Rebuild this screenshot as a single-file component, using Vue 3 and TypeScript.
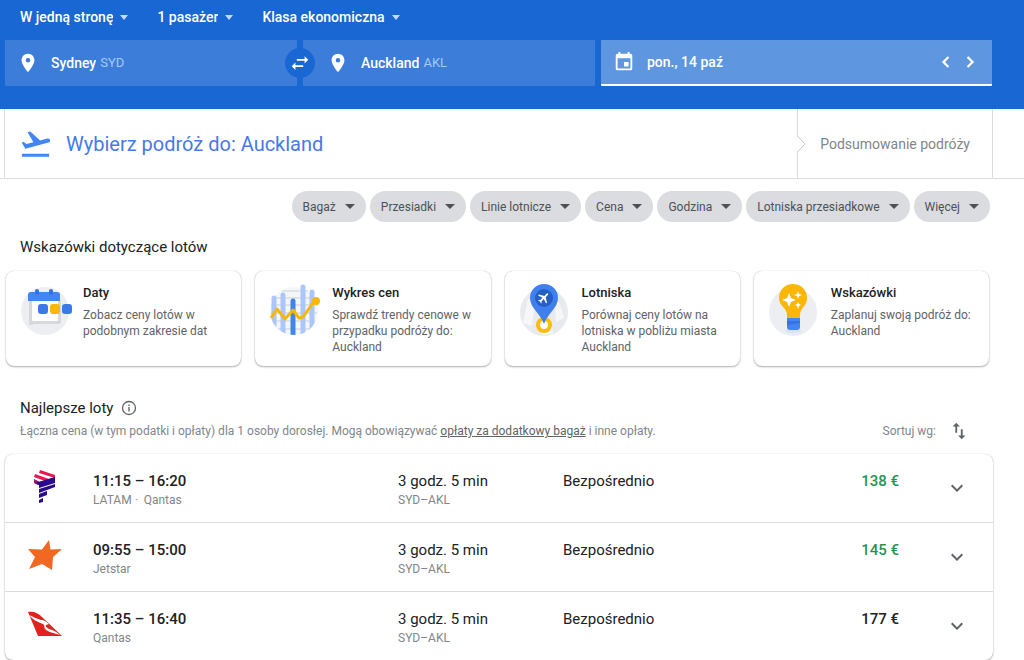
<script setup lang="ts">
import { ref } from 'vue'

interface Flight {
  airline: 'latam' | 'jetstar' | 'qantas'
  times: string
  carrier: string
  duration: string
  route: string
  stops: string
  price: string
  cheap: boolean
}

const tripType = ref('W jedną stronę')
const passengers = ref('1 pasażer')
const cabin = ref('Klasa ekonomiczna')
const tripTypes = ['W jedną stronę', 'W obie strony', 'Wiele miast']
const passengerOptions = ['1 pasażer', '2 pasażerów', '3 pasażerów']
const cabins = ['Klasa ekonomiczna', 'Klasa biznes', 'Pierwsza klasa']

const origin = ref('Sydney')
const destination = ref('Auckland')
const date = ref('pon., 14 paź')

const filters = ['Bagaż', 'Przesiadki', 'Linie lotnicze', 'Cena', 'Godzina', 'Lotniska przesiadkowe', 'Więcej']

const tips = [
  { id: 'dates', title: 'Daty', text: 'Zobacz ceny lotów w podobnym zakresie dat' },
  { id: 'graph', title: 'Wykres cen', text: 'Sprawdź trendy cenowe w przypadku podróży do: Auckland' },
  { id: 'airports', title: 'Lotniska', text: 'Porównaj ceny lotów na lotniska w pobliżu miasta Auckland' },
  { id: 'hints', title: 'Wskazówki', text: 'Zaplanuj swoją podróż do: Auckland' },
]

const flights: Flight[] = [
  { airline: 'latam', times: '11:15 – 16:20', carrier: 'LATAM ·  Qantas', duration: '3 godz. 5 min', route: 'SYD–AKL', stops: 'Bezpośrednio', price: '138 €', cheap: true },
  { airline: 'jetstar', times: '09:55 – 15:00', carrier: 'Jetstar', duration: '3 godz. 5 min', route: 'SYD–AKL', stops: 'Bezpośrednio', price: '145 €', cheap: true },
  { airline: 'qantas', times: '11:35 – 16:40', carrier: 'Qantas', duration: '3 godz. 5 min', route: 'SYD–AKL', stops: 'Bezpośrednio', price: '177 €', cheap: false },
]
</script>

<template>
  <div class="page">
    <header class="search">
      <div class="options">
        <label class="option">
          <select v-model="tripType" aria-label="Rodzaj podróży">
            <option v-for="o in tripTypes" :key="o">{{ o }}</option>
          </select>
          <svg class="caret" viewBox="0 0 10 5" aria-hidden="true"><path d="M1 0h8L5 5z" /></svg>
        </label>
        <label class="option">
          <select v-model="passengers" aria-label="Liczba pasażerów">
            <option v-for="o in passengerOptions" :key="o">{{ o }}</option>
          </select>
          <svg class="caret" viewBox="0 0 10 5" aria-hidden="true"><path d="M1 0h8L5 5z" /></svg>
        </label>
        <label class="option">
          <select v-model="cabin" aria-label="Klasa podróży">
            <option v-for="o in cabins" :key="o">{{ o }}</option>
          </select>
          <svg class="caret" viewBox="0 0 10 5" aria-hidden="true"><path d="M1 0h8L5 5z" /></svg>
        </label>
      </div>

      <div class="fields">
        <div class="field">
          <svg class="field-icon" viewBox="0 0 24 24" aria-hidden="true">
            <path d="M12 2C8.1 2 5 5.100 5 9c0 5.200 7 13 7 13s7-7.800 7-13c0-3.900-3.100-7-7-7zm0 9.500a2.500 2.500 0 1 1 0-5 2.500 2.500 0 0 1 0 5z" />
          </svg>
          <input v-model="origin" type="text" aria-label="Skąd" />
          <span class="code">SYD</span>
          <button class="swap" type="button" aria-label="Zamień miejsca">
            <svg viewBox="0 0 24 24" aria-hidden="true">
              <path d="M21 8.500 17 4.500v3.200H8.500v1.800H17v3zM3 15.500l4 4v-3.200h8.500v-1.800H7v-3z" />
            </svg>
          </button>
        </div>
        <div class="field">
          <svg class="field-icon" viewBox="0 0 24 24" aria-hidden="true">
            <path d="M12 2C8.1 2 5 5.100 5 9c0 5.200 7 13 7 13s7-7.800 7-13c0-3.900-3.100-7-7-7zm0 9.500a2.500 2.500 0 1 1 0-5 2.500 2.500 0 0 1 0 5z" />
          </svg>
          <input v-model="destination" type="text" aria-label="Dokąd" />
          <span class="code">AKL</span>
        </div>
        <div class="field date">
          <svg class="field-icon" viewBox="0 0 24 24" aria-hidden="true">
            <path d="M17 12h-5v5h5zM16 1v2H8V1H6v2H5a2 2 0 0 0-2 2v14c0 1.100.9 2 2 2h14a2 2 0 0 0 2-2V5a2 2 0 0 0-2-2h-1V1zm3 18H5V8h14z" />
          </svg>
          <input v-model="date" type="text" aria-label="Data wylotu" />
          <div class="steps">
            <button type="button" aria-label="Poprzedni dzień">
              <svg viewBox="0 0 24 24" aria-hidden="true"><path d="M15.900 6.900 14 5l-7 7 7 7 1.900-1.900L10.800 12z" /></svg>
            </button>
            <button type="button" aria-label="Następny dzień">
              <svg viewBox="0 0 24 24" aria-hidden="true"><path d="M8.100 17.100 10 19l7-7-7-7-1.900 1.900 5.100 5.100z" /></svg>
            </button>
          </div>
        </div>
      </div>
    </header>

    <div class="progress">
      <div class="stages">
        <h1 class="stage current">
          <svg class="takeoff" viewBox="0 0 32 32" aria-hidden="true">
            <path d="M1 26.500h29V29.500H1zM31 11.700c-.3-1.200-1.600-1.900-2.800-1.600l-7.900 2.100L10 2.700l-3 .8 6.200 10.600-7.400 2-2.900-2.300-2.200.6 3.900 6.700 24.800-6.600c1.200-.3 1.900-1.600 1.600-2.800z" />
          </svg>
          Wybierz podróż do: Auckland
        </h1>
        <div class="stage next">
          <svg class="notch" viewBox="0 0 9 18" aria-hidden="true"><path d="M0 1v16" class="gap" /><path d="M.5 1 8 9 .5 17" class="edge" /></svg>
          Podsumowanie podróży
        </div>
      </div>
    </div>

    <main class="content">
      <div class="filters">
        <button v-for="f in filters" :key="f" class="chip" type="button" aria-haspopup="true">
          {{ f }}
          <svg class="caret" viewBox="0 0 10 5" aria-hidden="true"><path d="M0 0h10L5 5z" /></svg>
        </button>
      </div>

      <h2 class="section-title">Wskazówki dotyczące lotów</h2>
      <div class="tips">
        <button v-for="tip in tips" :key="tip.id" class="tip" type="button">
          <svg v-if="tip.id === 'dates'" class="tip-art" viewBox="0 0 52 56" aria-hidden="true">
            <circle cx="24" cy="28" r="24" fill="#eceef1" />
            <path d="M8 17h4v25H8z" fill="#d5d8dc" />
            <rect x="9" y="17" width="31" height="24" rx="2" fill="#d5d8dc" />
            <rect x="11" y="17" width="26" height="21" rx="1" fill="#fff" />
            <path d="M7 18V12a3 3 0 0 1 3-3h26a3 3 0 0 1 3 3v6z" fill="#4285f4" />
            <rect x="14" y="6" width="4" height="6" rx="2" fill="#3372e4" />
            <rect x="28" y="6" width="4" height="6" rx="2" fill="#3372e4" />
            <rect x="17" y="21" width="10" height="10" rx="3" fill="#3b79e8" />
            <rect x="29" y="21" width="10" height="10" rx="3" fill="#fbb70b" />
            <rect x="41" y="21" width="10" height="10" rx="3" fill="#3b79e8" />
          </svg>
          <svg v-else-if="tip.id === 'graph'" class="tip-art" viewBox="0 0 52 56" aria-hidden="true">
            <defs><clipPath id="graph-disc"><path d="M0 0h52v28h-4A24 24 0 0 1 0 28V0z" /></clipPath></defs>
            <circle cx="24" cy="28" r="24" fill="#f5f6f8" />
            <path d="M12 8h26M4 15h40M1 22h47M1 30h46M3 38h42M8 46h32" stroke="#dfe2e6" stroke-width="2" />
            <g clip-path="url(#graph-disc)" stroke="#aac6fa" stroke-width="5" stroke-linecap="round">
              <path d="M4 15v40M13 12v45M33 4v55M42 9v44" />
              <path d="M23 18v40" stroke="#4285e8" />
            </g>
            <path d="m1 35 6-9 8 10 8-9 6 8 4-1 12-17" fill="none" stroke="#f5b60e" stroke-width="3" stroke-linejoin="round" />
            <circle cx="46" cy="18" r="4" fill="#fbb70b" />
          </svg>
          <svg v-else-if="tip.id === 'airports'" class="tip-art" viewBox="0 0 52 56" aria-hidden="true">
            <circle cx="24" cy="29" r="24" fill="#e8eaed" />
            <path d="m8 16 7 3-3 24-9-3zM18 45l14-3 1 9-10 1zM35 20l4-2 5 17-8 4z" fill="#f6f7f8" />
            <circle cx="24" cy="42" r="6" fill="#fff" stroke="#fbbc04" stroke-width="4" />
            <path d="M24 41C21 31 10 25 10 15a14 14 0 0 1 28 0c0 10-11 16-14 26z" fill="#4080ee" />
            <circle cx="24" cy="15" r="9" fill="#245fc5" />
            <path transform="translate(24 15) rotate(45) scale(.6) translate(-12 -12)" d="M21 16v-2l-8-5V3.500a1.500 1.500 0 0 0-3 0V9l-8 5v2l8-2.500V19l-2 1.500V22l3.500-1 3.500 1v-1.500L13 19v-5.500z" fill="#fff" />
          </svg>
          <svg v-else class="tip-art" viewBox="0 0 52 56" aria-hidden="true">
            <circle cx="24" cy="29" r="24" fill="#eceef1" />
            <ellipse cx="24" cy="48" rx="8" ry="2" fill="#d8e3f6" />
            <path d="M18 34h13v10c0 2-1 3-3 3h-7c-2 0-3-1-3-3z" fill="#4285f4" />
            <path d="M18 38h13v2l-13 2z" fill="#3573df" />
            <path d="M24 1c8 0 14 6 14 14 0 8-6 9-7 16v4H18v-4c-1-7-8-8-8-16C10 7 16 1 24 1z" fill="#fbb606" />
            <path d="m20 10 2 5 5 2-5 2-2 5-2-5-5-2 5-2zM29 8l1 3 3 1-3 1-1 3-1-3-3-1 3-1zM29 19l1 2 2 1-2 1-1 3-1-3-2-1 2-1z" fill="#fff" />
          </svg>
          <span class="tip-body">
            <span class="tip-title">{{ tip.title }}</span>
            <span class="tip-text">{{ tip.text }}</span>
          </span>
        </button>
      </div>

      <h2 class="section-title results-title">
        Najlepsze loty
        <svg class="info" viewBox="0 0 16 16" aria-hidden="true">
          <circle cx="8" cy="8" r="6.500" fill="none" stroke="currentColor" stroke-width="1.300" />
          <path d="M7.300 7h1.400v4.500H7.300zM7.300 4.500h1.400V6H7.300z" fill="currentColor" />
        </svg>
      </h2>
      <div class="summary">
        <p>Łączna cena (w tym podatki i opłaty) dla 1 osoby dorosłej. Mogą obowiązywać <a href="#">opłaty za dodatkowy bagaż</a> i inne opłaty.</p>
        <button class="sort" type="button">
          Sortuj wg:
          <svg viewBox="0 0 24 24" aria-hidden="true">
            <path d="M9 3 5 7h3v7h2V7h3zM16 17v-7h-2v7h-3l4 4 4-4z" />
          </svg>
        </button>
      </div>

      <ul class="flights">
        <li v-for="flight in flights" :key="flight.times" class="flight">
          <svg v-if="flight.airline === 'latam'" class="logo" viewBox="0 0 36 36" aria-hidden="true">
            <path d="m13 0 15 5v3L12 3zM8 4l14 5-4 2L7 7z" fill="#ed1650" />
            <path d="m7 9 6 3 15-5v3L11 15l-4-2z" fill="#a3126a" />
            <path d="M8 13 28 7v6l-16 5v-3zM12 19l16-5v3l-16 6zM12 24l8-3v4l-8 3zM12 30l4-2v4l-4 1z" fill="#2a0b8b" />
          </svg>
          <svg v-else-if="flight.airline === 'jetstar'" class="logo" viewBox="0 0 36 36" aria-hidden="true">
            <path d="m22 1 1.500 9.500L35 10l-9 8-1 13-10-6-13 5 6-12-7-8 14 .5z" fill="#f26722" />
          </svg>
          <svg v-else class="logo" viewBox="0 0 36 36" aria-hidden="true">
            <path d="M1 4c6-1 10 1 14 5l20 19H11z" fill="#df2420" />
            <path d="M2 7c5 2 8 4 12 5 4 0 5 2 8 4l-3 1c-1 1 1 3 3 4 4 1 8 3 11 6-6-2-12-3-15-6-1-2 0-4-2-5C11 14 6 12 2 7z" fill="#fff" />
          </svg>
          <div class="cell">
            <strong class="times">{{ flight.times }}</strong>
            <span class="detail">{{ flight.carrier }}</span>
          </div>
          <div class="cell">
            <span>{{ flight.duration }}</span>
            <span class="detail">{{ flight.route }}</span>
          </div>
          <div class="cell">{{ flight.stops }}</div>
          <div class="cell price" :class="{ cheap: flight.cheap }">{{ flight.price }}</div>
          <button class="expand" type="button" aria-label="Pokaż szczegóły lotu">
            <svg viewBox="0 0 24 24" aria-hidden="true"><path d="M16.600 8.600 12 13.200 7.400 8.600 6 10l6 6 6-6z" /></svg>
          </button>
        </li>
      </ul>
    </main>
  </div>
</template>

<style>
body {
  margin: 0;
  background: #fff;
}
</style>

<style scoped>
.page {
  color: #202124;
  font-family: Roboto, "Liberation Sans", sans-serif;
  font-size: 12px;
  line-height: 16px;
}

button,
input,
select {
  margin: 0;
  padding: 0;
  border: 0;
  background: none;
  color: inherit;
  font: inherit;
}

button {
  cursor: pointer;
}

svg {
  display: block;
  flex: none;
  fill: currentColor;
}

h1,
h2,
p,
ul {
  margin: 0;
  padding: 0;
  font-weight: 400;
}

.search {
  padding: 0 32px 23px 5px;
  background: #1967d2;
  color: #fff;
}

.options {
  display: flex;
  gap: 28px;
  height: 40px;
  padding-left: 15px;
}

.option {
  display: flex;
  align-items: center;
  gap: 6px;
  height: 34px;
  font-size: 14px;
  font-weight: 500;
}

.option select {
  appearance: none;
  field-sizing: content;
}

.option option {
  color: #202124;
}

.caret {
  width: 10px;
  height: 5px;
}

.option .caret {
  color: #c6dafc;
}

.fields {
  display: grid;
  grid-template-columns: 292fr 292fr 391fr;
  gap: 6px;
}

.field {
  position: relative;
  display: flex;
  align-items: center;
  height: 46px;
  box-sizing: border-box;
  padding: 0 12px;
  border-radius: 1px;
  background: #3c7dd9;
  font-size: 14px;
  font-weight: 500;
}

.field-icon {
  width: 22px;
  height: 22px;
  margin-right: 12px;
}

.field input {
  field-sizing: content;
  outline: none;
}

.code {
  margin-left: 4px;
  color: #a9c7f3;
  font-size: 13px;
  font-weight: 400;
}

.swap {
  position: absolute;
  z-index: 1;
  top: 8px;
  right: -18px;
  display: grid;
  place-items: center;
  width: 30px;
  height: 30px;
  border-radius: 50%;
  background: #1967d2;
}

.swap svg {
  width: 22px;
  height: 22px;
}

.field + .field:not(.date) {
  padding-left: 24px;
}

.field.date {
  border-bottom: 2px solid #fff;
  background: #5e97e0;
}

.steps {
  display: flex;
  gap: 4px;
  margin-left: auto;
}

.steps svg {
  width: 20px;
  height: 20px;
}

.progress {
  padding: 0 31px 0 4px;
  border-bottom: 1px solid #dadce0;
}

.stages {
  display: flex;
  border: solid #dadce0;
  border-width: 0 1px;
}

.stage {
  display: flex;
  align-items: center;
  height: 69px;
}

.current {
  flex: 1;
  gap: 15px;
  padding-left: 16px;
  color: #4879e8;
  font-size: 20px;
}

.takeoff {
  width: 30px;
  height: 30px;
  color: #4285f4;
}

.next {
  position: relative;
  padding: 0 22px;
  border-left: 1px solid #dadce0;
  color: #80868b;
  font-size: 14px;
}

.notch {
  position: absolute;
  top: 26px;
  left: -1px;
  width: 9px;
  height: 18px;
  fill: none;
}

.gap {
  stroke: #fff;
  stroke-width: 3;
}

.edge {
  stroke: #c4c7cb;
}

.content {
  padding: 12px 31px 0 5px;
}

.filters {
  display: flex;
  flex-wrap: wrap;
  justify-content: flex-end;
  gap: 4px;
  padding-right: 3px;
}

.chip {
  display: flex;
  align-items: center;
  gap: 9px;
  height: 31px;
  padding: 0 11px;
  border-radius: 16px;
  background: #dadce0;
  color: #4d5156;
}

.section-title {
  margin-top: 15px;
  padding-left: 15px;
  font-size: 15px;
  line-height: 20px;
}

.tips {
  display: grid;
  grid-template-columns: repeat(4, 1fr);
  gap: 14px;
  margin-top: 14px;
  padding: 0 4px 0 1px;
}

.tip {
  display: flex;
  align-items: flex-start;
  gap: 10px;
  min-height: 95px;
  padding: 12px 12px 11px 15px;
  border-radius: 8px;
  box-shadow: 0 1px 2px rgba(60, 64, 67, 0.4), 0 0 1px rgba(60, 64, 67, 0.3);
  text-align: left;
}

.tip-art {
  width: 52px;
  height: 56px;
}

.tip-body {
  display: flex;
  flex-direction: column;
  gap: 4px;
}

.tip-title {
  font-size: 13px;
  font-weight: 500;
  line-height: 20px;
}

.tip-text {
  color: #5f6368;
}

.results-title {
  display: flex;
  align-items: center;
  gap: 8px;
  margin-top: 32px;
}

.info {
  width: 16px;
  height: 16px;
  color: #5f6368;
}

.summary {
  display: flex;
  align-items: center;
  justify-content: space-between;
  margin-top: 1px;
  padding: 0 23px 0 15px;
  color: #80868b;
}

.summary a {
  color: #5f6368;
}

.sort {
  display: flex;
  align-items: center;
  gap: 12px;
}

.sort svg {
  width: 22px;
  height: 24px;
  color: #5f6368;
}

.flights {
  margin-top: 11px;
  border-radius: 8px;
  box-shadow: 0 1px 2px rgba(60, 64, 67, 0.4), 0 0 1px rgba(60, 64, 67, 0.3);
  list-style: none;
}

.flight {
  display: grid;
  grid-template-columns: 88px 305fr 165fr 200fr 136fr 94px;
  height: 68px;
  font-size: 15px;
  line-height: 20px;
}

.flight + .flight {
  border-top: 1px solid #dadce0;
}

.logo {
  align-self: center;
  width: 36px;
  height: 36px;
  margin-left: 22px;
}

.cell {
  display: flex;
  flex-direction: column;
  padding-top: 17px;
}

.times,
.price {
  font-weight: 500;
}

.detail {
  color: #80868b;
  font-size: 12px;
  line-height: 18px;
  white-space: pre;
}

.price {
  text-align: right;
}

.cheap {
  color: #1e9553;
}

.expand {
  display: grid;
  place-items: center;
  justify-self: end;
  width: 24px;
  margin-right: 24px;
  color: #5f6368;
}

.expand svg {
  width: 24px;
  height: 24px;
}
</style>
